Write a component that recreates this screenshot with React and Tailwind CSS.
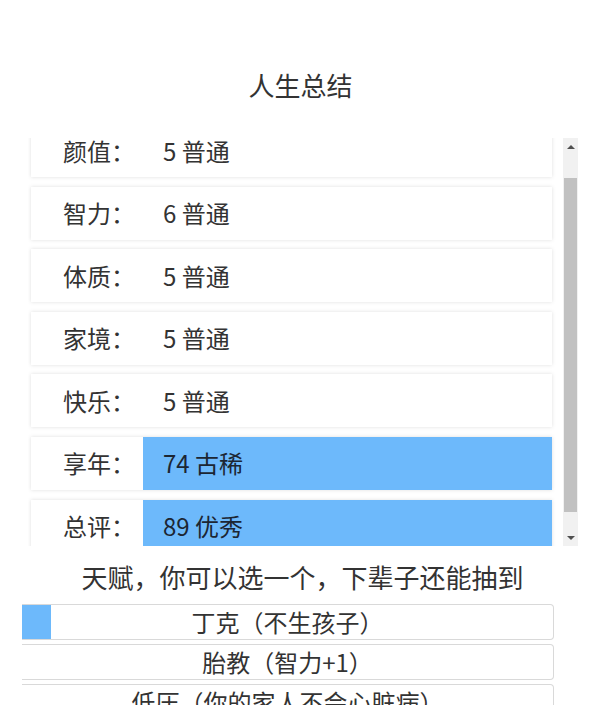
import { useEffect, useRef } from "react";

const stats = [
  { label: "颜值：", value: "5 普通" },
  { label: "智力：", value: "6 普通" },
  { label: "体质：", value: "5 普通" },
  { label: "家境：", value: "5 普通" },
  { label: "快乐：", value: "5 普通" },
  { label: "享年：", value: "74 古稀", hl: true },
  { label: "总评：", value: "89 优秀", hl: true },
];

const talents = [
  { name: "丁克（不生孩子）", picked: true },
  { name: "胎教（智力+1）" },
  { name: "低压（你的家人不会心脏病）" },
];

const FONT = "font-['Microsoft_YaHei','Noto_Sans_CJK_SC',sans-serif]";

// classic scrollbar look, the page's own one is hidden
const ScrollBar = () => (
  <div className="w-[15px] h-full shrink-0 flex flex-col bg-[#f1f1f1]">
    <div className="h-[17px] flex items-center justify-center">
      <div className="w-0 h-0 border-x-[4px] border-x-transparent border-b-[4px] border-b-[#505050]" />
    </div>
    <div className="h-[23px]" />
    <div className="h-[334px] mx-[1px] bg-[#c1c1c1]" />
    <div className="flex-1" />
    <div className="h-[17px] flex items-center justify-center">
      <div className="w-0 h-0 border-x-[4px] border-x-transparent border-t-[4px] border-t-[#505050]" />
    </div>
  </div>
);

const App = () => {
  const listRef = useRef(null);

  useEffect(() => {
    if (listRef.current) listRef.current.scrollTop = 28;
  }, []);

  return (
    <div className={`w-[609px] h-[705px] overflow-hidden bg-white text-[#333] ${FONT}`}>
      <div className="h-[138px] pt-[68px] pr-[8px] text-center text-[26px] leading-[34px]">
        人生总结
      </div>

      <div className="ml-[28px] w-[550px] h-[408px] flex">
        <div
          ref={listRef}
          className="flex-1 h-full overflow-y-auto [scrollbar-width:none]"
        >
          <div className="flex flex-col gap-[9.6px] py-[14px] pl-[3px] pr-[11px]">
            {stats.map((s) => (
              <div
                key={s.label}
                className="flex h-[53px] shrink-0 bg-white shadow-[0_0_4px_rgba(0,0,0,0.13)]"
              >
                <div className="w-[112px] shrink-0 flex items-center justify-end pr-[8px] text-[24px]">
                  {s.label}
                </div>
                <div
                  className={`flex-1 flex items-center pl-[20px] text-[24px] ${
                    s.hl ? "bg-[#6db9fb] text-[#1c2633]" : ""
                  }`}
                >
                  {s.value}
                </div>
              </div>
            ))}
          </div>
        </div>
        <ScrollBar />
      </div>

      <div className="h-[58px] pt-[3px] pr-[4px] flex items-center justify-center text-[26px]">
        天赋，你可以选一个，下辈子还能抽到
      </div>

      <div className="ml-[22px] w-[532px] flex flex-col gap-[4px]">
        {talents.map((t) => (
          <div
            key={t.name}
            className="relative h-[36px] shrink-0 flex items-center justify-center border border-l-0 border-[#d9d9d9] rounded-r-[4px] text-[24px] leading-[30px]"
          >
            {t.picked && (
              <div className="absolute left-0 top-0 bottom-0 w-[29px] bg-[#6db9fb]" />
            )}
            <span className="relative">{t.name}</span>
          </div>
        ))}
      </div>
    </div>
  );
};

export default App;
